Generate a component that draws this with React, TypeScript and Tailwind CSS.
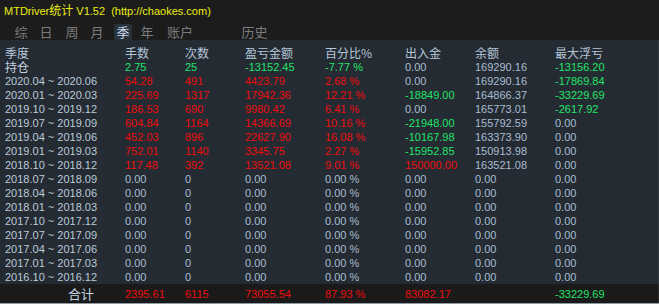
import React from "react";

type Cell = { v: string; c: "r" | "g" | "n" };

const R = (v: string): Cell => ({ v, c: "r" });
const G = (v: string): Cell => ({ v, c: "g" });
const N = (v: string): Cell => ({ v, c: "n" });

const rows: { label: string; cells: Cell[] }[] = [
  { label: "2020.04 ~ 2020.06", cells: [R("54.28"), R("491"), R("4423.79"), R("2.68 %"), N("0.00"), N("169290.16"), G("-17869.84")] },
  { label: "2020.01 ~ 2020.03", cells: [R("225.69"), R("1317"), R("17942.36"), R("12.21 %"), G("-18849.00"), N("164866.37"), G("-33229.69")] },
  { label: "2019.10 ~ 2019.12", cells: [R("186.53"), R("690"), R("9980.42"), R("6.41 %"), N("0.00"), N("165773.01"), G("-2617.92")] },
  { label: "2019.07 ~ 2019.09", cells: [R("604.84"), R("1164"), R("14366.69"), R("10.16 %"), G("-21948.00"), N("155792.59"), N("0.00")] },
  { label: "2019.04 ~ 2019.06", cells: [R("452.03"), R("896"), R("22627.90"), R("16.08 %"), G("-10167.98"), N("163373.90"), N("0.00")] },
  { label: "2019.01 ~ 2019.03", cells: [R("752.01"), R("1140"), R("3345.75"), R("2.27 %"), G("-15952.85"), N("150913.98"), N("0.00")] },
  { label: "2018.10 ~ 2018.12", cells: [R("117.48"), R("392"), R("13521.08"), R("9.01 %"), R("150000.00"), N("163521.08"), N("0.00")] },
  ...[
    "2018.07 ~ 2018.09",
    "2018.04 ~ 2018.06",
    "2018.01 ~ 2018.03",
    "2017.10 ~ 2017.12",
    "2017.07 ~ 2017.09",
    "2017.04 ~ 2017.06",
    "2017.01 ~ 2017.03",
    "2016.10 ~ 2016.12",
  ].map((label) => ({
    label,
    cells: [N("0.00"), N("0"), N("0.00"), N("0.00 %"), N("0.00"), N("0.00"), N("0.00")],
  })),
];

const colorOf = (c: Cell["c"]) =>
  c === "r" ? "text-[#ee0c0c]" : c === "g" ? "text-[#22e468]" : "text-[#a9bdd1]";

const grid = "grid grid-cols-[120px_60px_60px_80px_80px_70px_80px_1fr] pl-[5px]";

const tabs = [
  { t: "综", cls: "ml-[12px] w-[18px]" },
  { t: "日", cls: "ml-[7px] w-[18px]" },
  { t: "周", cls: "ml-[8px] w-[18px]" },
  { t: "月", cls: "ml-[7px] w-[18px]" },
  { t: "季", cls: "ml-[8px] w-[18px] bg-[#27323d] text-[#c9d9ea] rounded-[2px]" },
  { t: "年", cls: "ml-[6px] w-[18px]" },
  { t: "账户", cls: "ml-[8px] w-[32px]" },
  { t: "历史", cls: "ml-[43px] w-[31px]" },
];

const cjk = "font-['Noto_Sans_CJK_SC','Liberation_Sans',sans-serif]";
const num = "font-['Liberation_Sans','Noto_Sans_CJK_SC',sans-serif]";

export default function App() {
  return (
    <div className={`w-[659px] h-[304px] bg-[#1c1c1c] flex flex-col overflow-hidden ${num}`}>
      <div className="h-[24px] pl-[4px] pt-[2px] text-[11px] leading-[16px] text-[#ecec10] whitespace-pre">
        MTDriver<span className={`${cjk} text-[12px]`}>统计</span> V1.52  (http://chaokes.com)
      </div>
      <div className={`h-[16px] flex text-[13px] leading-[16px] text-[#7c7c7c] ${cjk}`}>
        {tabs.map((tb) => (
          <div key={tb.t} className={`text-center h-[16px] ${tb.cls}`}>
            {tb.t}
          </div>
        ))}
      </div>
      <div className="h-[244px] bg-[#242b33] pt-[6px] pr-[1px] border-r border-[#2e353d] text-[11px] leading-[14px]">
        <div className={`${grid} h-[14px] text-[12px] leading-[14px] text-[#b6c6d8] ${cjk}`}>
          <div>季度</div>
          <div>手数</div>
          <div>次数</div>
          <div>盈亏金额</div>
          <div>百分比%</div>
          <div>出入金</div>
          <div>余额</div>
          <div>最大浮亏</div>
        </div>
        <div className={`${grid} h-[14px]`}>
          <div className={`text-[12px] leading-[14px] text-[#c6d2e0] ${cjk}`}>持仓</div>
          <div className="text-[#22e468]">2.75</div>
          <div className="text-[#22e468]">25</div>
          <div className="text-[#22e468]">-13152.45</div>
          <div className="text-[#22e468]">-7.77 %</div>
          <div className="text-[#a9bdd1]">0.00</div>
          <div className="text-[#a9bdd1]">169290.16</div>
          <div className="text-[#22e468]">-13156.20</div>
        </div>
        {rows.map((r) => (
          <div key={r.label} className={`${grid} h-[14px] whitespace-pre`}>
            <div className="text-[#bccad8]">{r.label}</div>
            {r.cells.map((c, i) => (
              <div key={i} className={colorOf(c.c)}>
                {c.v}
              </div>
            ))}
          </div>
        ))}
      </div>
      <div className={`${grid} h-[19px] items-center bg-[#1a1a1a] text-[11px] leading-[14px] border-r border-[#2a2a2a]`}>
        <div className={`text-right pr-[31px] text-[13px] leading-[16px] text-[#c6d6e6] ${cjk}`}>合计</div>
        <div className="text-[#ee0c0c]">2395.61</div>
        <div className="text-[#ee0c0c]">6115</div>
        <div className="text-[#ee0c0c]">73055.54</div>
        <div className="text-[#ee0c0c]">87.93 %</div>
        <div className="text-[#ee0c0c]">83082.17</div>
        <div></div>
        <div className="text-[#22e468]">-33229.69</div>
      </div>
      <div className="h-[1px] bg-[#8e9aa6]"></div>
    </div>
  );
}
